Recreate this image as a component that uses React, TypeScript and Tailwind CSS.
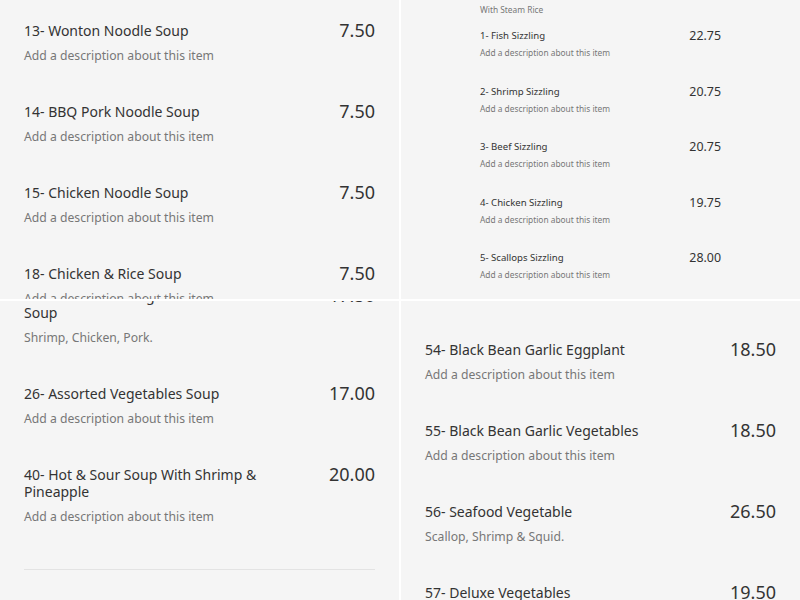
type MenuItem = {
  name: string
  price: string
  description?: string
}

const placeholder = 'Add a description about this item'

const noodleSoups: MenuItem[] = [
  { name: '13- Wonton Noodle Soup', price: '7.50' },
  { name: '14- BBQ Pork Noodle Soup', price: '7.50' },
  { name: '15- Chicken Noodle Soup', price: '7.50' },
  { name: '18- Chicken & Rice Soup', price: '7.50' },
]

const sizzling: MenuItem[] = [
  { name: '1- Fish Sizzling', price: '22.75' },
  { name: '2- Shrimp Sizzling', price: '20.75' },
  { name: '3- Beef Sizzling', price: '20.75' },
  { name: '4- Chicken Sizzling', price: '19.75' },
  { name: '5- Scallops Sizzling', price: '28.00' },
]

const largeSoups: MenuItem[] = [
  {
    name: '25- Seafood Sizzling Rice Wonton Soup',
    price: '17.50',
    description: 'Shrimp, Chicken, Pork.',
  },
  { name: '26- Assorted Vegetables Soup', price: '17.00' },
  { name: '40- Hot & Sour Soup With Shrimp & Pineapple', price: '20.00' },
]

const vegetables: MenuItem[] = [
  { name: '54- Black Bean Garlic Eggplant', price: '18.50' },
  { name: '55- Black Bean Garlic Vegetables', price: '18.50' },
  { name: '56- Seafood Vegetable', price: '26.50', description: 'Scallop, Shrimp & Squid.' },
  { name: '57- Deluxe Vegetables', price: '19.50' },
]

function MenuRow({ item }: { item: MenuItem }) {
  return (
    <div className="flex items-start justify-between gap-4 pt-[22px] pb-[16px]">
      <div className="max-w-[245px]">
        <div className="text-[14px] leading-[17px] text-[#333]">{item.name}</div>
        <div className="mt-[8px] text-[12.2px] leading-[18px] text-[#777]">
          {item.description ?? placeholder}
        </div>
      </div>
      <div className="text-[18px] leading-[17px] text-[#333]">{item.price}</div>
    </div>
  )
}

function CompactRow({ item }: { item: MenuItem }) {
  return (
    <div className="flex items-start justify-between gap-3 pt-[14px] pb-[12.5px]">
      <div>
        <div className="text-[9.6px] leading-[12px] text-[#333]">{item.name}</div>
        <div className="mt-[5px] text-[8.35px] leading-[12px] text-[#777]">
          {item.description ?? placeholder}
        </div>
      </div>
      <div className="text-[12.4px] leading-[12px] text-[#333]">{item.price}</div>
    </div>
  )
}

export default function App() {
  return (
    <div className="grid h-[600px] w-[800px] grid-cols-[399px_399px] grid-rows-[299px_299px] gap-[2px] overflow-hidden bg-white font-['Noto_Sans','Open_Sans',sans-serif]">
      <section className="overflow-hidden bg-[#f5f5f5] px-6">
        {noodleSoups.map((item) => (
          <MenuRow key={item.name} item={item} />
        ))}
      </section>

      <section className="overflow-hidden bg-[#f5f5f5] px-[79px]">
        <div className="pt-[4px] text-[8.35px] leading-[12px] text-[#777]">With Steam Rice</div>
        {sizzling.map((item) => (
          <CompactRow key={item.name} item={item} />
        ))}
      </section>

      <section className="overflow-hidden bg-[#f5f5f5] px-6">
        <div className="-mt-[36px]">
          {largeSoups.map((item) => (
            <MenuRow key={item.name} item={item} />
          ))}
          <div className="mt-[27px] h-px bg-[#e3e3e3]" />
        </div>
      </section>

      <section className="overflow-hidden bg-[#f5f5f5] px-6 pt-[18px]">
        {vegetables.map((item) => (
          <MenuRow key={item.name} item={item} />
        ))}
      </section>
    </div>
  )
}
